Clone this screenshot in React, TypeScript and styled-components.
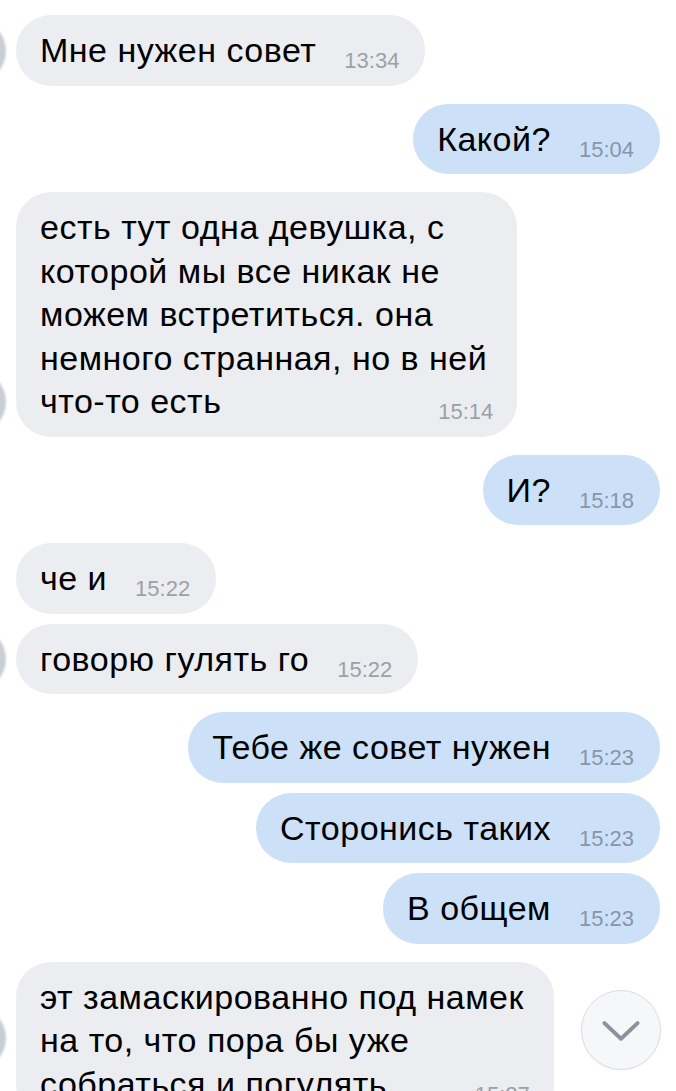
import styled, { createGlobalStyle } from "styled-components";

type Message = {
  out?: boolean;
  text: string;
  time: string;
  avatar?: boolean;
};

const MESSAGES: Message[] = [
  { text: "Мне нужен совет", time: "13:34", avatar: true },
  { out: true, text: "Какой?", time: "15:04" },
  {
    text: "есть тут одна девушка, с\nкоторой мы все никак не\nможем встретиться. она\nнемного странная, но в ней\nчто-то есть",
    time: "15:14",
    avatar: true,
  },
  { out: true, text: "И?", time: "15:18" },
  { text: "че и", time: "15:22" },
  { text: "говорю гулять го", time: "15:22", avatar: true },
  { out: true, text: "Тебе же совет нужен", time: "15:23" },
  { out: true, text: "Сторонись таких", time: "15:23" },
  { out: true, text: "В общем", time: "15:23" },
  {
    text: "эт замаскированно под намек\nна то, что пора бы уже\nсобраться и погулять",
    time: "15:27",
    avatar: true,
  },
];

const GlobalStyle = createGlobalStyle`
  html, body {
    margin: 0;
    padding: 0;
    background: #fff;
  }
  body {
    font-family: "Liberation Sans", Arial, sans-serif;
    -webkit-font-smoothing: antialiased;
  }
`;

const Page = styled.div`
  position: relative;
  height: 100vh;
  overflow: hidden;
  background: #fff;
`;

const Feed = styled.div`
  display: flex;
  flex-direction: column;
  padding: 15px 16px 0 16px;
`;

const Row = styled.div<{ $out?: boolean; $gap: number }>`
  display: flex;
  align-items: flex-end;
  justify-content: ${(p) => (p.$out ? "flex-end" : "flex-start")};
  margin-top: ${(p) => p.$gap}px;
`;

// avatar sits mostly off the left edge; sticky keeps it in view for tall bubbles
const Avatar = styled.div<{ $hidden?: boolean }>`
  flex: none;
  position: sticky;
  bottom: 21px;
  width: 64px;
  height: 64px;
  margin-left: -74px;
  margin-right: 10px;
  margin-bottom: 3px;
  border-radius: 50%;
  background: #c9ced3;
  filter: blur(1px);
  opacity: ${(p) => (p.$hidden ? 0 : 1)};
`;

const Bubble = styled.div<{ $out?: boolean; $multi?: boolean }>`
  display: flow-root;
  max-width: 560px;
  padding: 14px ${(p) => (p.$multi ? 30 : 26)}px 13px 24px;
  border-radius: 35px;
  background: ${(p) => (p.$out ? "#cce0f7" : "#ebedf0")};
  color: #000;
  font-size: 34px;
  line-height: 43.5px;
  letter-spacing: 0.5px;
  white-space: pre-line;
`;

const Time = styled.span<{ $out?: boolean; $multi?: boolean }>`
  float: right;
  margin: 21px ${(p) => (p.$multi ? -6 : 0)}px 0 28px;
  font-size: 22px;
  line-height: 22px;
  letter-spacing: 0;
  color: ${(p) => (p.$out ? "#8796a8" : "#9ba1a8")};
  white-space: nowrap;
`;

const ScrollDown = styled.button`
  position: absolute;
  right: 15px;
  bottom: 21px;
  width: 80px;
  height: 80px;
  padding: 0;
  border-radius: 50%;
  border: 1px solid #d9dce1;
  background: #f6f7f9;
  display: flex;
  align-items: center;
  justify-content: center;
  box-shadow: 0 1px 2px rgba(0, 0, 0, 0.04);
`;

export default function App() {
  return (
    <Page>
      <GlobalStyle />
      <Feed>
        {MESSAGES.map((m, i) => {
          const prev = MESSAGES[i - 1];
          const gap = i === 0 ? 0 : prev.out === m.out ? 10 : 18;
          const multi = m.text.includes("\n");
          return (
            <Row key={i} $out={m.out} $gap={gap}>
              {!m.out && <Avatar $hidden={!m.avatar} />}
              <Bubble $out={m.out} $multi={multi}>
                {m.text}
                <Time $out={m.out} $multi={multi}>
                  {m.time}
                </Time>
              </Bubble>
            </Row>
          );
        })}
      </Feed>
      <ScrollDown aria-label="Вниз">
        <svg width="80" height="80" viewBox="0 0 80 80">
          <polyline
            points="23,33 40,49 57,33"
            fill="none"
            stroke="#8c939c"
            strokeWidth="4"
            strokeLinecap="round"
            strokeLinejoin="round"
          />
        </svg>
      </ScrollDown>
    </Page>
  );
}
